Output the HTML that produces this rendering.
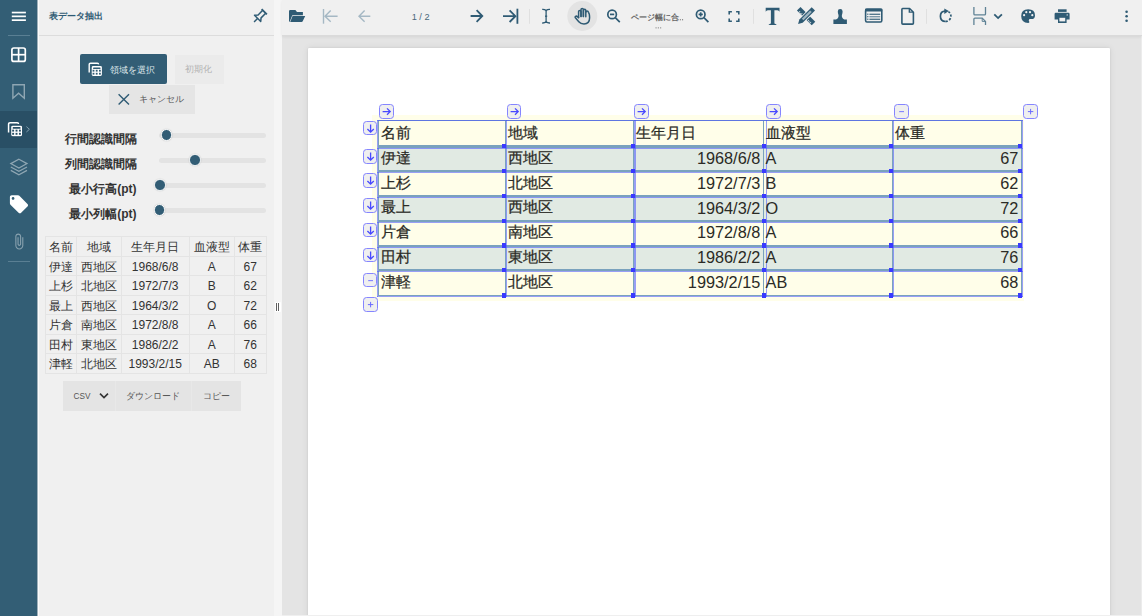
<!DOCTYPE html>
<html lang="ja">
<head>
<meta charset="utf-8">
<style>
*{box-sizing:border-box;margin:0;padding:0}
html,body{width:1142px;height:616px;overflow:hidden;background:#f0f0f0;font-family:"Liberation Sans",sans-serif;color:#333}
.abs{position:absolute}
#side{left:0;top:0;width:37px;height:616px;background:#335e75}
#sideline{left:37px;top:0;width:2px;height:616px;background:linear-gradient(90deg,#9fb0ba 0,#9fb0ba 50%,#fbfbfb 50%,#fbfbfb 100%)}
#panel{left:39px;top:0;width:235px;height:616px;background:#f0f0f0}
#phead{left:39px;top:0;width:235px;height:36px;border-bottom:1px solid #dcdcdc}
#split{left:274px;top:0;width:8px;height:616px;background:#f5f5f5}
#tool{left:282px;top:0;width:860px;height:36px;background:#f0f0f0;border-bottom:1px solid #dadada;box-shadow:0 1px 3px rgba(0,0,0,.07);z-index:1}
#doc{left:282px;top:36px;width:860px;height:580px;background:#e4e4e4}
#page{left:308px;top:48px;width:802px;height:600px;background:#fff;box-shadow:0 0 2px rgba(0,0,0,.1),0 0 7px rgba(0,0,0,.08);border-radius:1px}

.t{font-family:"Liberation Sans",sans-serif}
.lbl{left:40px;width:96.5px;text-align:right;font-size:12px;line-height:18px;font-weight:bold;color:#333;white-space:nowrap}
.trk{left:159px;width:107px;height:5px;border-radius:2.5px;background:#e3e3e3}
.thumb{width:11.6px;height:11.6px;border-radius:50%;background:#325d75;border:1.8px solid #fff;box-shadow:0 0 1.5px rgba(0,0,0,.18)}
#rt{left:45px;top:236px;border-collapse:collapse;font-size:12px;color:#333}
#rt td{border:1px solid #e4e4e4;height:19.5px;padding:0;text-align:center;line-height:17px;white-space:nowrap;position:relative;top:0}
#rt td{vertical-align:top;padding-top:0}
#rt td span{position:relative;top:2px}

.hd{width:4.2px;height:4.2px;background:#3a3aff}
.dt{font-size:14.6px;line-height:18px;color:#2b2b26;white-space:nowrap;-webkit-text-stroke:0.25px #2b2b26}
.dl{font-size:16.3px;-webkit-text-stroke:0}
.sb{width:14.8px;height:14.8px;border:1px solid #8585ff;border-radius:3.5px;background:#efefef;padding:0}
.sb svg{position:absolute;left:0;top:0}
</style>
</head>
<body>
<!-- SIDEBAR -->
<div id="side" class="abs">
  <svg class="abs" style="left:0;top:0" width="37" height="280" viewBox="0 0 37 280">
    <g fill="#fff">
      <rect x="11.8" y="11.7" width="14.1" height="1.7"/>
      <rect x="11.8" y="15.5" width="14.1" height="1.7"/>
      <rect x="11.8" y="19.3" width="14.1" height="1.7"/>
    </g>
    <rect x="8" y="35" width="22" height="1" fill="#5a7f93"/>
    <g fill="none" stroke="#fff" stroke-width="1.7">
      <rect x="11.9" y="48" width="13.4" height="13.4" rx="2"/>
      <line x1="18.6" y1="48" x2="18.6" y2="61.4"/>
      <line x1="11.9" y1="54.7" x2="25.3" y2="54.7"/>
    </g>
    <path d="M12.9 84.8 H24.3 V98.2 L18.6 93.2 L12.9 98.2 Z" fill="none" stroke="#fff" stroke-opacity=".45" stroke-width="1.4" stroke-linejoin="miter"/>
    <rect x="0" y="111" width="37" height="37" fill="#294f65"/>
    <g transform="translate(7.3 121.4) scale(1.06)">
    <path d="M1.2 10.4 V2.6 Q1.2 1.2 2.6 1.2 H9.4 Q10.6 1.2 10.6 2.4" fill="none" stroke="#fff" stroke-width="1.4"/>
    <rect x="3.1" y="3.4" width="11.4" height="11.1" rx="2" fill="#fff" stroke="#294f65" stroke-width="1.2"/>
    <g fill="#294f65"><rect x="5.1" y="5.4" width="7.4" height="1.5" rx=".5"/>
    <rect x="4.6" y="7.8" width="1.8" height="1.8"/><rect x="7.8" y="7.8" width="1.8" height="1.8"/><rect x="11" y="7.8" width="1.8" height="1.8"/>
    <rect x="4.6" y="10.8" width="1.8" height="1.8"/><rect x="7.8" y="10.8" width="1.8" height="1.8"/><rect x="11" y="10.8" width="1.8" height="1.8"/></g>
    </g>
    <path d="M26.4 126.6 L29.4 129.3 L26.4 132" fill="none" stroke="#7f9cac" stroke-width="1"/>
    <g fill="none" stroke="#fff" stroke-opacity=".45" stroke-width="1.2" stroke-linejoin="miter">
      <path d="M18.9 159.2 L27 163.6 L18.9 168 L10.8 163.6 Z"/>
      <path d="M10.8 167 L18.9 171.4 L27 167"/>
      <path d="M10.8 170.4 L18.9 174.8 L27 170.4"/>
    </g>
    <path transform="translate(8.1 193.4) scale(0.905)" fill="#fff" d="M21.41 11.58l-9-9C12.05 2.22 11.55 2 11 2H4c-1.1 0-2 .9-2 2v7c0 .55.22 1.05.59 1.42l9 9c.36.36.86.58 1.41.58.55 0 1.05-.22 1.41-.59l7-7c.37-.36.59-.86.59-1.41 0-.55-.23-1.06-.59-1.42zM5.5 7C4.67 7 4 6.33 4 5.5S4.67 4 5.5 4 7 4.67 7 5.5 6.33 7 5.5 7z"/>
    <path transform="translate(10.2 232.8) scale(0.73)" fill="#fff" fill-opacity=".42" d="M16.5 6v11.5c0 2.21-1.79 4-4 4s-4-1.79-4-4V5c0-1.38 1.12-2.5 2.5-2.5s2.5 1.12 2.5 2.5v10.5c0 .55-.45 1-1 1s-1-.45-1-1V6H10v9.5c0 1.38 1.12 2.5 2.5 2.5s2.5-1.12 2.5-2.5V5c0-2.21-1.79-4-4-4S7 2.79 7 5v12.5c0 3.04 2.46 5.5 5.5 5.5s5.5-2.46 5.5-5.5V6h-1.5z"/>
    <rect x="8" y="261" width="22" height="1" fill="#5a7f93"/>
  </svg>
</div>

<div id="sideline" class="abs"></div>
<!-- PANEL -->
<div id="panel" class="abs">
</div>
<div id="phead" class="abs"></div>
<div class="abs t" style="left:49px;top:9px;font-size:9px;line-height:14px;font-weight:bold;color:#2f5b74;white-space:nowrap">表データ抽出</div>
<svg class="abs" style="left:250px;top:6px" width="20" height="20" viewBox="0 0 20 20">
  <g transform="translate(14.25 5.75) rotate(45)" fill="none" stroke="#2f5b74" stroke-linejoin="round">
    <line x1="-3.7" y1="0" x2="3.7" y2="0" stroke-width="1.8"/>
    <path d="M-2.1 0.4 V6.6 L-4.4 9.4 H4.4 L2.1 6.6 V0.4" stroke-width="1.5"/>
    <line x1="0" y1="9.5" x2="0" y2="14.4" stroke-width="1.5"/>
  </g>
</svg>
<!-- buttons -->
<div class="abs" style="left:80px;top:54px;width:87px;height:30px;background:#325d75;border-radius:2px"></div>
<svg class="abs" style="left:88px;top:62px" width="16" height="16" viewBox="0 0 16 16">
    <path d="M1.2 10.4 V2.6 Q1.2 1.2 2.6 1.2 H9.4 Q10.6 1.2 10.6 2.4" fill="none" stroke="#fff" stroke-width="1.4"/>
    <rect x="3.1" y="3.4" width="11.4" height="11.1" rx="2" fill="#fff" stroke="#325d75" stroke-width="1.2"/>
    <g fill="#325d75"><rect x="5.1" y="5.4" width="7.4" height="1.5" rx=".5"/>
    <rect x="4.6" y="7.8" width="1.8" height="1.8"/><rect x="7.8" y="7.8" width="1.8" height="1.8"/><rect x="11" y="7.8" width="1.8" height="1.8"/>
    <rect x="4.6" y="10.8" width="1.8" height="1.8"/><rect x="7.8" y="10.8" width="1.8" height="1.8"/><rect x="11" y="10.8" width="1.8" height="1.8"/></g>
</svg>
<div class="abs t" style="left:110px;top:62.8px;font-size:9.1px;line-height:14px;color:#dfe7eb;white-space:nowrap">領域を選択</div>
<div class="abs" style="left:175px;top:55px;width:49px;height:29px;background:#ebebeb"></div>
<div class="abs t" style="left:185px;top:62px;font-size:9px;line-height:14px;color:#b3b3b3;white-space:nowrap">初期化</div>
<div class="abs" style="left:109px;top:85px;width:86px;height:29px;background:#e5e5e5"></div>
<svg class="abs" style="left:116px;top:92px" width="15" height="15" viewBox="0 0 15 15">
  <path d="M2.6 2.2 L13 12.6 M13 2.2 L2.6 12.6" stroke="#2f5b74" stroke-width="1.4" fill="none"/>
</svg>
<div class="abs t" style="left:139px;top:92px;font-size:9px;line-height:14px;color:#555;white-space:nowrap">キャンセル</div>
<!-- sliders -->
<div class="abs lbl" style="top:130px">行間認識間隔</div>
<div class="abs lbl" style="top:155px">列間認識間隔</div>
<div class="abs lbl" style="top:180px">最小行高(pt)</div>
<div class="abs lbl" style="top:205px">最小列幅(pt)</div>
<div class="abs trk" style="top:132.5px"></div>
<div class="abs trk" style="top:157.5px"></div>
<div class="abs trk" style="top:182.5px"></div>
<div class="abs trk" style="top:207.5px"></div>
<div class="abs thumb" style="left:160.6px;top:129.3px"></div>
<div class="abs thumb" style="left:189.1px;top:154.3px"></div>
<div class="abs thumb" style="left:154.4px;top:179.3px"></div>
<div class="abs thumb" style="left:153.8px;top:204.3px"></div>
<!-- result table -->
<table id="rt" class="abs">
<tr><td style="width:31px"><span>名前</span></td><td style="width:44.6px"><span>地域</span></td><td style="width:68.2px"><span>生年月日</span></td><td style="width:45px"><span>血液型</span></td><td style="width:32px"><span>体重</span></td></tr>
<tr><td><span>伊達</span></td><td><span>西地区</span></td><td><span>1968/6/8</span></td><td><span>A</span></td><td><span>67</span></td></tr>
<tr><td><span>上杉</span></td><td><span>北地区</span></td><td><span>1972/7/3</span></td><td><span>B</span></td><td><span>62</span></td></tr>
<tr><td><span>最上</span></td><td><span>西地区</span></td><td><span>1964/3/2</span></td><td><span>O</span></td><td><span>72</span></td></tr>
<tr><td><span>片倉</span></td><td><span>南地区</span></td><td><span>1972/8/8</span></td><td><span>A</span></td><td><span>66</span></td></tr>
<tr><td><span>田村</span></td><td><span>東地区</span></td><td><span>1986/2/2</span></td><td><span>A</span></td><td><span>76</span></td></tr>
<tr><td><span>津軽</span></td><td><span>北地区</span></td><td><span>1993/2/15</span></td><td><span>AB</span></td><td><span>68</span></td></tr>
</table>
<!-- csv bar -->
<div class="abs" style="left:63px;top:380.5px;width:178px;height:30px;background:#e4e4e4"></div>
<div class="abs" style="left:115.3px;top:380.5px;width:1px;height:30px;background:#e8e8e8"></div>
<div class="abs" style="left:190.8px;top:380.5px;width:1px;height:30px;background:#e8e8e8"></div>
<div class="abs t" style="left:73.6px;top:389.6px;font-size:8.2px;line-height:14px;color:#555;white-space:nowrap">CSV</div>
<svg class="abs" style="left:98px;top:391.2px" width="12" height="10" viewBox="0 0 12 10">
  <path d="M2 2.6 L6 6.6 L10 2.6" fill="none" stroke="#333" stroke-width="1.6"/>
</svg>
<div class="abs t" style="left:126px;top:389px;font-size:9px;line-height:14px;color:#555;white-space:nowrap">ダウンロード</div>
<div class="abs t" style="left:203px;top:389px;font-size:9px;line-height:14px;color:#555;white-space:nowrap">コピー</div>
<!-- splitter -->
<div id="split" class="abs"></div>
<div class="abs" style="left:275px;top:302px;width:6px;height:10px;background:#fff;border-radius:1px"></div>
<div class="abs" style="left:276px;top:303px;width:1.3px;height:8px;background:#606060"></div>
<div class="abs" style="left:278.2px;top:303px;width:1.3px;height:8px;background:#606060"></div>

<!-- TOOLBAR -->
<div id="tool" class="abs"></div>
<svg class="abs" style="left:0;top:0;z-index:2" width="1142" height="35" viewBox="0 0 1142 35">
  <defs></defs>
  <!-- folder -->
  <path d="M289 11.2 Q289 10 290.2 10 H295.4 L297 11.9 H302.9 V15.2 H292.3 L289.6 22.1 Q289 21.6 289 20.8 Z" fill="#2f5b74"/>
  <path d="M292.6 15.9 H305.2 L302.7 21.3 Q302.4 22.1 301.6 22.1 H290.2 Z" fill="#2f5b74"/>
  <!-- first page -->
  <g fill="none" stroke="#a5b8c4" stroke-width="1.4">
    <line x1="323.5" y1="9" x2="323.5" y2="23.7"/>
    <path d="M325 16.2 H337.6 M330.7 10.6 L325 16.2 L330.7 21.8"/>
    <path d="M359 16.2 H370.3 M364.6 10.6 L359 16.2 L364.6 21.8"/>
  </g>
  <text x="420.6" y="20.3" font-size="9.2" fill="#4a687b" text-anchor="middle" font-family="Liberation Sans">1 / 2</text>
  <g fill="none" stroke="#2f5b74" stroke-width="1.8">
    <path d="M470.6 16 H482 M476.6 10.2 L482.3 16 L476.6 21.8"/>
    <path d="M503 16.2 H515.6 M509.6 10.4 L515.4 16.2 L509.6 22"/>
    <line x1="517.4" y1="8.7" x2="517.4" y2="23.8"/>
  </g>
  <rect x="529.2" y="9" width="0.8" height="14.8" fill="#dcdcdc"/>
  <!-- I beam -->
  <g fill="none" stroke="#2f5b74" stroke-width="1.3">
    <path d="M542.2 9.4 Q544.6 9.2 546.1 10.6 Q547.6 9.2 550 9.4"/>
    <path d="M542.2 23 Q544.6 23.2 546.1 21.8 Q547.6 23.2 550 23"/>
    <line x1="546.1" y1="10.4" x2="546.1" y2="22"/>
    <line x1="545" y1="16.2" x2="547.2" y2="16.2"/>
  </g>
  <!-- hand -->
  <circle cx="582.3" cy="16" r="15" fill="#e3e3e3"/>
  <g fill="none" stroke="#2f5b74" stroke-width="1.5" stroke-linecap="round" stroke-linejoin="round">
    <path d="M578.6 17.4 V11.6 Q578.6 10.4 579.8 10.4 Q581 10.4 581 11.6 V16.6"/>
    <path d="M581 16.6 V9.6 Q581 8.4 582.2 8.4 Q583.4 8.4 583.4 9.6 V16.6"/>
    <path d="M583.4 16.6 V10.4 Q583.4 9.2 584.6 9.2 Q585.8 9.2 585.8 10.4 V16.8"/>
    <path d="M585.8 12.2 Q585.8 11 587 11 Q588.2 11 588.4 12.2 Q589.6 13.4 589.6 17.8 Q589.6 24 584 24 Q580.6 24 578.8 21.8 L575.4 17.8 Q574.8 17 575.6 16.4 Q576.6 15.8 577.4 16.6 L578.6 17.8"/>
  </g>
  <!-- zoom out -->
  <g fill="none" stroke="#2f5b74" stroke-width="1.7">
    <circle cx="612.1" cy="14.4" r="4.3"/>
    <line x1="615.3" y1="17.6" x2="619.8" y2="22.1"/>
    <line x1="610" y1="14.4" x2="614.2" y2="14.4"/>
  </g>
  <text x="630.6" y="20" font-size="8.1" font-weight="bold" fill="#666" font-family="Liberation Sans">ページ幅に合</text>
  <g fill="#777"><rect x="677.6" y="19.2" width="1.1" height="1.1"/><rect x="679.8" y="19.2" width="1.1" height="1.1"/><rect x="682" y="19.2" width="1.1" height="1.1"/></g>
  <g fill="#888"><rect x="655.5" y="27.3" width="1.1" height="1.1"/><rect x="657.8" y="27.3" width="1.1" height="1.1"/><rect x="660.1" y="27.3" width="1.1" height="1.1"/></g>
  <!-- zoom in -->
  <g fill="none" stroke="#2f5b74" stroke-width="1.7">
    <circle cx="700.7" cy="14.4" r="4.3"/>
    <line x1="703.9" y1="17.6" x2="708.4" y2="22.1"/>
    <line x1="698.6" y1="14.4" x2="702.8" y2="14.4"/>
    <line x1="700.7" y1="12.3" x2="700.7" y2="16.5"/>
  </g>
  <!-- fullscreen -->
  <g fill="none" stroke="#2f5b74" stroke-width="1.6">
    <path d="M729.2 14.4 V11.7 H731.9 M736.1 11.7 H738.8 V14.4 M738.8 18.6 V21.3 H736.1 M731.9 21.3 H729.2 V18.6"/>
  </g>
  <rect x="753" y="9" width="0.8" height="14.8" fill="#dcdcdc"/>
  <!-- T -->
  <path d="M765.7 7.8 H779.5 V11.8 Q779 10.2 777.4 10.2 H774.4 V23.4 Q775.6 23.4 776.8 25 H768.4 Q769.6 23.4 770.9 23.4 V10.2 H767.8 Q766.2 10.2 765.7 11.8 Z" fill="#2f5b74"/>
  <!-- pencil & ruler -->
  <g transform="translate(806.1 16.1) scale(0.9) rotate(-45)">
    <rect x="-2.8" y="-11.6" width="5.6" height="23.2" fill="#2f5b74"/>
  </g>
  <g transform="translate(806.1 16.1) scale(0.9) rotate(45)" >
    <rect x="-3.6" y="-11.6" width="7.2" height="23.2" fill="#f0f0f0"/>
  </g>
  <g transform="translate(806.1 16.1) scale(0.9) rotate(-45)">
    <g fill="#f0f0f0">
      <rect x="-2.8" y="-9" width="2" height="0.8"/><rect x="-2.8" y="-7" width="1.2" height="0.8"/><rect x="-2.8" y="-5.6" width="2" height="0.8"/>
      <rect x="-2.8" y="5" width="2" height="0.8"/><rect x="-2.8" y="6.6" width="1.2" height="0.8"/><rect x="-2.8" y="8.2" width="2" height="0.8"/>
    </g>
  </g>
  <g transform="translate(806.1 16.1) scale(0.9) rotate(45)">
    <path d="M-2.6 -11.4 H2.6 V8 L0 12.6 L-2.6 8 Z" fill="#2f5b74"/>
    <rect x="-1.3" y="-7.6" width="2.6" height="13" fill="#9fb4c0"/>
  </g>
  <!-- stamp -->
  <path d="M837.8 11.4 Q837.8 9 840.2 9 Q842.6 9 842.6 11.4 Q842.6 13.2 841.9 15 Q841.6 16.2 842.2 17.6 Q842.8 19 844.4 19.4 H846.9 V24 H833.4 V19.4 H836 Q837.6 19 838.2 17.6 Q838.8 16.2 838.5 15 Q837.8 13.2 837.8 11.4 Z" fill="#2f5b74"/>
  <!-- form -->
  <rect x="865.6" y="9.3" width="16.2" height="12.7" rx="1.4" fill="none" stroke="#2f5b74" stroke-width="1.6"/>
  <rect x="865" y="8.6" width="17.4" height="3" rx="1" fill="#2f5b74"/>
  <g fill="#2f5b74">
    <rect x="867.2" y="13.6" width="1.2" height="1.2"/><rect x="869.4" y="13.7" width="10.8" height="1.1"/>
    <rect x="867.2" y="16.1" width="1.2" height="1.2"/><rect x="869.4" y="16" width="10.8" height="1.4" fill="#7a97a8"/>
    <rect x="867.2" y="18.6" width="1.2" height="1.2"/><rect x="869.4" y="18.7" width="10.8" height="1.1"/>
  </g>
  <!-- page -->
  <path d="M902.6 8.5 H909.6 L913.4 12.3 V23.2 Q913.4 24.1 912.5 24.1 H902.8 Q901.9 24.1 901.9 23.2 V9.4 Q901.9 8.5 902.6 8.5 Z" fill="none" stroke="#2f5b74" stroke-width="1.6" stroke-linejoin="round"/>
  <path d="M909.3 8.8 V12.2 H913.1" fill="none" stroke="#2f5b74" stroke-width="1.3"/>
  <rect x="926.1" y="9" width="0.8" height="14.8" fill="#dcdcdc"/>
  <!-- rotate -->
  <g fill="none" stroke="#2f5b74" stroke-width="1.7">
    <path d="M945.2 11.1 Q940.4 11.1 940.4 16.3 Q940.4 21.4 945.6 21.5"/>
    <path d="M945.6 21.4 A5.3 5.3 0 0 0 950.9 16.2 A5.3 5.3 0 0 0 948.4 11.6" stroke-dasharray="2.2 1.6"/>
  </g>
  <path d="M944.3 8.4 L948.8 11.1 L944.3 13.9 Z" fill="#2f5b74"/>
  <!-- page break -->
  <g fill="none" stroke="#5f8295" stroke-width="1.3">
    <path d="M973.9 7 V13.9 Q973.9 14.9 974.9 14.9 H984.5 Q985.5 14.9 985.5 13.9 V7"/>
    <path d="M973.9 25.1 V19.1 Q973.9 18.1 974.9 18.1 H982.2 L985.5 21.4 V25.1"/>
    <path d="M982.2 18.3 V21.4 H985.4" stroke-width="1"/>
  </g>
  <path d="M994.3 14.3 L998.1 18.1 L1001.9 14.3" fill="none" stroke="#2f5b74" stroke-width="1.8"/>
  <!-- palette -->
  <path d="M1028.2 9.3 Q1035 9.3 1035 15.4 Q1035 19 1031.4 19 H1030.2 Q1028.8 19 1028.8 20.3 Q1028.8 21 1029.2 21.4 Q1029.6 21.9 1029.2 22.5 Q1028.9 22.9 1028.2 22.9 Q1021.2 22.9 1021.2 16.1 Q1021.2 9.3 1028.2 9.3 Z" fill="#2f5b74"/>
  <g fill="#f0f0f0">
    <circle cx="1024.1" cy="15.2" r="1.1"/><circle cx="1026.3" cy="12.2" r="1.1"/><circle cx="1030" cy="12.2" r="1.1"/><circle cx="1032.3" cy="15.2" r="1.1"/>
  </g>
  <!-- printer -->
  <rect x="1058" y="9.3" width="8.6" height="2.6" fill="#2f5b74"/>
  <path d="M1055.8 12.8 H1068.4 Q1069.6 12.8 1069.6 14 V19.6 H1066.6 V22.9 H1058 V19.6 H1054.6 V14 Q1054.6 12.8 1055.8 12.8 Z" fill="#2f5b74"/>
  <rect x="1059.4" y="17.8" width="5.8" height="3.6" fill="#f0f0f0"/>
  <circle cx="1067.2" cy="14.9" r="0.7" fill="#f0f0f0"/>
  <!-- kebab -->
  <g fill="#2f5b74"><circle cx="1126.6" cy="11.8" r="1.3"/><circle cx="1126.6" cy="16.3" r="1.3"/><circle cx="1126.6" cy="20.8" r="1.3"/></g>
</svg>

<div id="doc" class="abs"></div>
<div id="page" class="abs"></div>
<div class="abs" style="left:282px;top:615px;width:860px;height:1px;background:#efefef"></div>
<div class="abs" style="left:1141px;top:36px;width:1px;height:580px;background:#ececec"></div>
<!-- DOC TABLE -->
<div class="abs" style="left:372px;top:115px;width:652px;height:185.5px;background:#fffee9"></div>
<div class="abs" style="left:378px;top:145.0px;width:644px;height:25.1px;background:#e1eae3"></div>
<div class="abs" style="left:378px;top:194.9px;width:644px;height:24.8px;background:#e1eae3"></div>
<div class="abs" style="left:378px;top:244.5px;width:644px;height:24.8px;background:#e1eae3"></div>
<div class="abs" style="left:378px;top:120.4px;width:644px;height:1.0px;background:#7aa2bd"></div>
<div class="abs" style="left:378px;top:145.0px;width:644px;height:2.8px;background:#7aa2bd"></div>
<div class="abs" style="left:378px;top:170.1px;width:644px;height:2.0px;background:#7aa2bd"></div>
<div class="abs" style="left:378px;top:194.9px;width:644px;height:2.0px;background:#7aa2bd"></div>
<div class="abs" style="left:378px;top:219.7px;width:644px;height:2.0px;background:#7aa2bd"></div>
<div class="abs" style="left:378px;top:244.5px;width:644px;height:2.0px;background:#7aa2bd"></div>
<div class="abs" style="left:378px;top:269.3px;width:644px;height:2.0px;background:#7aa2bd"></div>
<div class="abs" style="left:378px;top:294.6px;width:644px;height:1.8px;background:#7aa2bd"></div>
<div class="abs" style="left:378.0px;top:120.4px;width:1.1px;height:176px;background:#7aa2bd"></div>
<div class="abs" style="left:505.3px;top:120.4px;width:1.1px;height:176px;background:#7aa2bd"></div>
<div class="abs" style="left:633.4px;top:120.4px;width:1.1px;height:176px;background:#7aa2bd"></div>
<div class="abs" style="left:762.9px;top:120.4px;width:1.1px;height:176px;background:#7aa2bd"></div>
<div class="abs" style="left:891.8px;top:120.4px;width:1.1px;height:176px;background:#7aa2bd"></div>
<div class="abs" style="left:1021.0px;top:120.4px;width:1.1px;height:176px;background:#7aa2bd"></div>
<div class="abs" style="left:377.2px;top:120.0px;width:646.2px;height:1.2px;background:rgba(70,80,255,.55)"></div>
<div class="abs" style="left:377.2px;top:147.8px;width:646.2px;height:1.2px;background:rgba(70,80,255,.55)"></div>
<div class="abs" style="left:377.2px;top:172.1px;width:646.2px;height:1.2px;background:rgba(70,80,255,.55)"></div>
<div class="abs" style="left:377.2px;top:196.9px;width:646.2px;height:1.2px;background:rgba(70,80,255,.55)"></div>
<div class="abs" style="left:377.2px;top:221.7px;width:646.2px;height:1.2px;background:rgba(70,80,255,.55)"></div>
<div class="abs" style="left:377.2px;top:246.5px;width:646.2px;height:1.2px;background:rgba(70,80,255,.55)"></div>
<div class="abs" style="left:377.2px;top:271.3px;width:646.2px;height:1.2px;background:rgba(70,80,255,.55)"></div>
<div class="abs" style="left:377.2px;top:295.8px;width:646.2px;height:1.2px;background:rgba(70,80,255,.55)"></div>
<div class="abs" style="left:377.2px;top:120px;width:1.2px;height:176.9px;background:rgba(70,80,255,.55)"></div>
<div class="abs" style="left:506.2px;top:120px;width:1.2px;height:176.9px;background:rgba(70,80,255,.55)"></div>
<div class="abs" style="left:634.4px;top:120px;width:1.2px;height:176.9px;background:rgba(70,80,255,.55)"></div>
<div class="abs" style="left:765.6px;top:120px;width:1.2px;height:176.9px;background:rgba(70,80,255,.55)"></div>
<div class="abs" style="left:893.2px;top:120px;width:1.2px;height:176.9px;background:rgba(70,80,255,.55)"></div>
<div class="abs" style="left:1022.2px;top:120px;width:1.2px;height:176.9px;background:rgba(70,80,255,.55)"></div>
<div class="abs hd" style="left:502.3px;top:144.3px"></div>
<div class="abs hd" style="left:502.3px;top:169.0px"></div>
<div class="abs hd" style="left:502.3px;top:193.8px"></div>
<div class="abs hd" style="left:502.3px;top:218.6px"></div>
<div class="abs hd" style="left:502.3px;top:243.4px"></div>
<div class="abs hd" style="left:502.3px;top:268.2px"></div>
<div class="abs hd" style="left:502.3px;top:293.4px"></div>
<div class="abs hd" style="left:630.5px;top:144.3px"></div>
<div class="abs hd" style="left:630.5px;top:169.0px"></div>
<div class="abs hd" style="left:630.5px;top:193.8px"></div>
<div class="abs hd" style="left:630.5px;top:218.6px"></div>
<div class="abs hd" style="left:630.5px;top:243.4px"></div>
<div class="abs hd" style="left:630.5px;top:268.2px"></div>
<div class="abs hd" style="left:630.5px;top:293.4px"></div>
<div class="abs hd" style="left:761.7px;top:144.3px"></div>
<div class="abs hd" style="left:761.7px;top:169.0px"></div>
<div class="abs hd" style="left:761.7px;top:193.8px"></div>
<div class="abs hd" style="left:761.7px;top:218.6px"></div>
<div class="abs hd" style="left:761.7px;top:243.4px"></div>
<div class="abs hd" style="left:761.7px;top:268.2px"></div>
<div class="abs hd" style="left:761.7px;top:293.4px"></div>
<div class="abs hd" style="left:889.3px;top:144.3px"></div>
<div class="abs hd" style="left:889.3px;top:169.0px"></div>
<div class="abs hd" style="left:889.3px;top:193.8px"></div>
<div class="abs hd" style="left:889.3px;top:218.6px"></div>
<div class="abs hd" style="left:889.3px;top:243.4px"></div>
<div class="abs hd" style="left:889.3px;top:268.2px"></div>
<div class="abs hd" style="left:889.3px;top:293.4px"></div>
<div class="abs hd" style="left:1018.3px;top:144.3px"></div>
<div class="abs hd" style="left:1018.3px;top:169.0px"></div>
<div class="abs hd" style="left:1018.3px;top:193.8px"></div>
<div class="abs hd" style="left:1018.3px;top:218.6px"></div>
<div class="abs hd" style="left:1018.3px;top:243.4px"></div>
<div class="abs hd" style="left:1018.3px;top:268.2px"></div>
<div class="abs hd" style="left:1018.3px;top:293.4px"></div>
<div class="abs dt" style="left:380.7px;top:123.6px">名前</div>
<div class="abs dt" style="left:508.0px;top:123.6px">地域</div>
<div class="abs dt" style="left:636.1px;top:123.6px">生年月日</div>
<div class="abs dt" style="left:765.6px;top:123.6px">血液型</div>
<div class="abs dt" style="left:894.5px;top:123.6px">体重</div>
<div class="abs dt" style="left:380.7px;top:148.5px">伊達</div>
<div class="abs dt" style="left:508.0px;top:148.5px">西地区</div>
<div class="abs dt dl" style="left:633.4px;top:148.7px;width:126.9px;text-align:right">1968/6/8</div>
<div class="abs dt dl" style="left:765.6px;top:148.7px">A</div>
<div class="abs dt dl" style="left:891.8px;top:148.7px;width:126.6px;text-align:right">67</div>
<div class="abs dt" style="left:380.7px;top:173.6px">上杉</div>
<div class="abs dt" style="left:508.0px;top:173.6px">北地区</div>
<div class="abs dt dl" style="left:633.4px;top:173.8px;width:126.9px;text-align:right">1972/7/3</div>
<div class="abs dt dl" style="left:765.6px;top:173.8px">B</div>
<div class="abs dt dl" style="left:891.8px;top:173.8px;width:126.6px;text-align:right">62</div>
<div class="abs dt" style="left:380.7px;top:198.4px">最上</div>
<div class="abs dt" style="left:508.0px;top:198.4px">西地区</div>
<div class="abs dt dl" style="left:633.4px;top:198.6px;width:126.9px;text-align:right">1964/3/2</div>
<div class="abs dt dl" style="left:765.6px;top:198.6px">O</div>
<div class="abs dt dl" style="left:891.8px;top:198.6px;width:126.6px;text-align:right">72</div>
<div class="abs dt" style="left:380.7px;top:223.2px">片倉</div>
<div class="abs dt" style="left:508.0px;top:223.2px">南地区</div>
<div class="abs dt dl" style="left:633.4px;top:223.4px;width:126.9px;text-align:right">1972/8/8</div>
<div class="abs dt dl" style="left:765.6px;top:223.4px">A</div>
<div class="abs dt dl" style="left:891.8px;top:223.4px;width:126.6px;text-align:right">66</div>
<div class="abs dt" style="left:380.7px;top:248.0px">田村</div>
<div class="abs dt" style="left:508.0px;top:248.0px">東地区</div>
<div class="abs dt dl" style="left:633.4px;top:248.2px;width:126.9px;text-align:right">1986/2/2</div>
<div class="abs dt dl" style="left:765.6px;top:248.2px">A</div>
<div class="abs dt dl" style="left:891.8px;top:248.2px;width:126.6px;text-align:right">76</div>
<div class="abs dt" style="left:380.7px;top:272.8px">津軽</div>
<div class="abs dt" style="left:508.0px;top:272.8px">北地区</div>
<div class="abs dt dl" style="left:633.4px;top:273.0px;width:126.9px;text-align:right">1993/2/15</div>
<div class="abs dt dl" style="left:765.6px;top:273.0px">AB</div>
<div class="abs dt dl" style="left:891.8px;top:273.0px;width:126.6px;text-align:right">68</div>
<div class="abs sb" style="left:379.3px;top:104.1px"><svg width="13" height="13" viewBox="0 0 13 13"><path d="M2.6 6.6 H10.2 M7 3.4 L10.2 6.6 L7 9.8" fill="none" stroke="#4848ff" stroke-width="1.3"/></svg></div>
<div class="abs sb" style="left:506.6px;top:104.1px"><svg width="13" height="13" viewBox="0 0 13 13"><path d="M2.6 6.6 H10.2 M7 3.4 L10.2 6.6 L7 9.8" fill="none" stroke="#4848ff" stroke-width="1.3"/></svg></div>
<div class="abs sb" style="left:634.1px;top:104.1px"><svg width="13" height="13" viewBox="0 0 13 13"><path d="M2.6 6.6 H10.2 M7 3.4 L10.2 6.6 L7 9.8" fill="none" stroke="#4848ff" stroke-width="1.3"/></svg></div>
<div class="abs sb" style="left:766.4px;top:104.1px"><svg width="13" height="13" viewBox="0 0 13 13"><path d="M2.6 6.6 H10.2 M7 3.4 L10.2 6.6 L7 9.8" fill="none" stroke="#4848ff" stroke-width="1.3"/></svg></div>
<div class="abs sb" style="left:894.1px;top:104.1px"><svg width="13" height="13" viewBox="0 0 13 13"><path d="M4.2 6.6 H9" stroke="#8080ff" stroke-width="1.1"/></svg></div>
<div class="abs sb" style="left:1023.1px;top:104.3px"><svg width="13" height="13" viewBox="0 0 13 13"><path d="M3.9 6.6 H9.3 M6.6 3.9 V9.3" stroke="#6a6aff" stroke-width="1"/></svg></div>
<div class="abs sb" style="left:362.5px;top:120.6px"><svg width="13" height="13" viewBox="0 0 13 13"><path d="M6.6 2.6 V10.2 M3.4 7 L6.6 10.2 L9.8 7" fill="none" stroke="#4848ff" stroke-width="1.3"/></svg></div>
<div class="abs sb" style="left:362.5px;top:149.1px"><svg width="13" height="13" viewBox="0 0 13 13"><path d="M6.6 2.6 V10.2 M3.4 7 L6.6 10.2 L9.8 7" fill="none" stroke="#4848ff" stroke-width="1.3"/></svg></div>
<div class="abs sb" style="left:362.5px;top:173.4px"><svg width="13" height="13" viewBox="0 0 13 13"><path d="M6.6 2.6 V10.2 M3.4 7 L6.6 10.2 L9.8 7" fill="none" stroke="#4848ff" stroke-width="1.3"/></svg></div>
<div class="abs sb" style="left:362.5px;top:198.2px"><svg width="13" height="13" viewBox="0 0 13 13"><path d="M6.6 2.6 V10.2 M3.4 7 L6.6 10.2 L9.8 7" fill="none" stroke="#4848ff" stroke-width="1.3"/></svg></div>
<div class="abs sb" style="left:362.5px;top:222.6px"><svg width="13" height="13" viewBox="0 0 13 13"><path d="M6.6 2.6 V10.2 M3.4 7 L6.6 10.2 L9.8 7" fill="none" stroke="#4848ff" stroke-width="1.3"/></svg></div>
<div class="abs sb" style="left:362.5px;top:247.6px"><svg width="13" height="13" viewBox="0 0 13 13"><path d="M6.6 2.6 V10.2 M3.4 7 L6.6 10.2 L9.8 7" fill="none" stroke="#4848ff" stroke-width="1.3"/></svg></div>
<div class="abs sb" style="left:362.5px;top:272.7px"><svg width="13" height="13" viewBox="0 0 13 13"><path d="M4.2 6.6 H9" stroke="#8080ff" stroke-width="1.1"/></svg></div>
<div class="abs sb" style="left:362.8px;top:297.3px"><svg width="13" height="13" viewBox="0 0 13 13"><path d="M3.9 6.6 H9.3 M6.6 3.9 V9.3" stroke="#6a6aff" stroke-width="1"/></svg></div>
<!-- /DOC TABLE -->
</body>
</html>
